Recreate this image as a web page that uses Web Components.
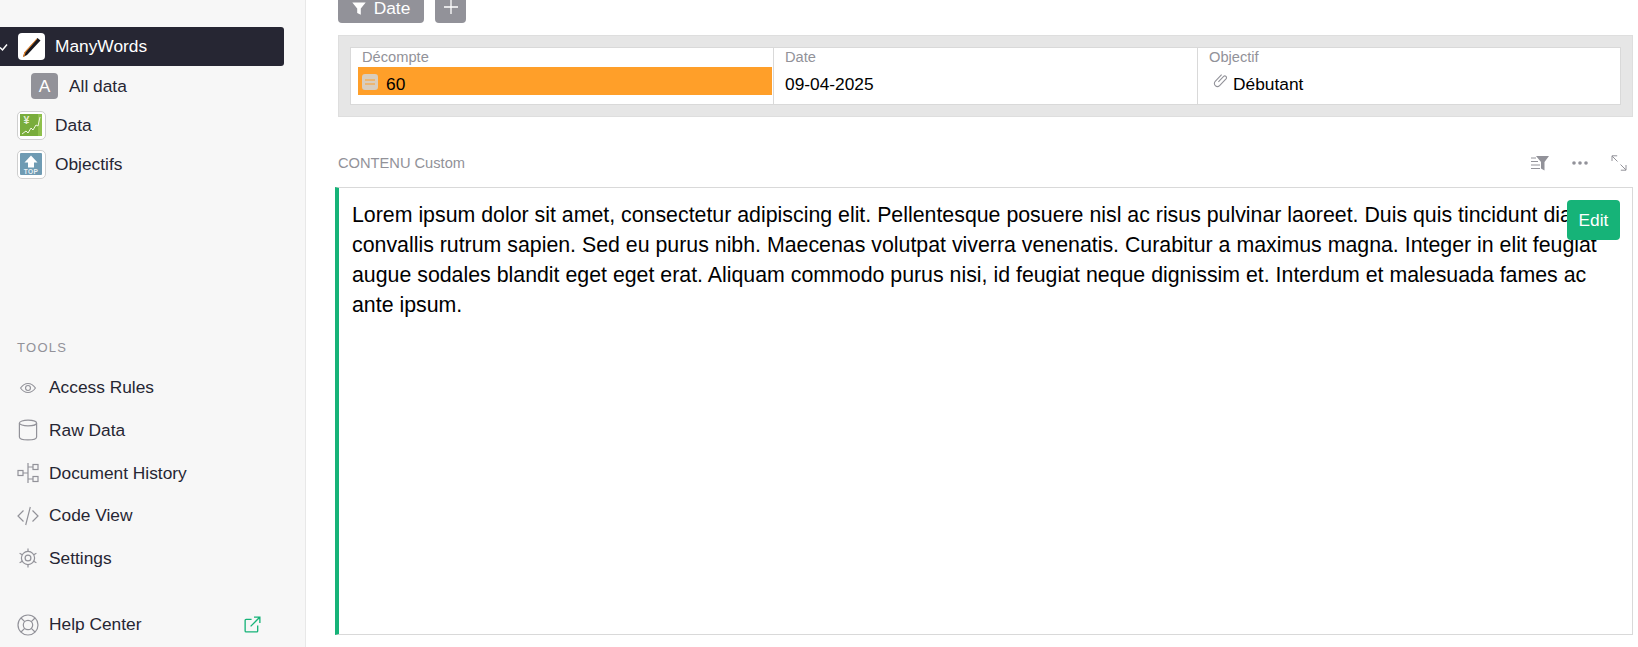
<!DOCTYPE html>
<html>
<head>
<meta charset="utf-8">
<style>
  html, body { margin: 0; height: 100%; overflow: hidden; }
  body { font-family: "Liberation Sans", Arial, sans-serif; color: #262633; background: #fff; }
</style>
</head>
<body>
<app-shell>
  <left-panel slot="side"></left-panel>
  <filter-bar slot="main"></filter-bar>
  <card-section slot="main"></card-section>
  <custom-section slot="main"></custom-section>
</app-shell>

<script>
const ICONS = {
  eye: `<svg width="18" height="14" viewBox="0 0 20 16" fill="none" stroke="#929299" stroke-width="1.3"><path d="M1.5 8C4 4.4 6.8 2.8 10 2.8S16 4.4 18.5 8C16 11.6 13.2 13.2 10 13.2S4 11.6 1.5 8Z"/><circle cx="10" cy="8" r="2.8"/></svg>`,
  db: `<svg width="20" height="22" viewBox="0 0 20 22" fill="none" stroke="#929299" stroke-width="1.2"><ellipse cx="10" cy="4" rx="8.6" ry="2.9"/><path d="M1.4 4V18C1.4 19.7 5.2 20.9 10 20.9S18.6 19.7 18.6 18V4"/></svg>`,
  history: `<svg width="22" height="22" viewBox="0 0 22 22" fill="none" stroke="#929299" stroke-width="1.2"><rect x="1" y="8.5" width="5" height="5"/><rect x="16" y="2.5" width="5" height="5"/><rect x="16" y="14.5" width="5" height="5"/><path d="M6 11H11M11 1V21M11 5H16M11 17H16"/></svg>`,
  code: `<svg width="22" height="20" viewBox="0 0 22 20" fill="none" stroke="#929299" stroke-width="1.2"><path d="M6.5 4.5L1 10L6.5 15.5M15.5 4.5L21 10L15.5 15.5M13.3 1L8.7 19"/></svg>`,
  gear: `<svg width="20" height="20" viewBox="0 0 20 20" fill="none" stroke="#929299" stroke-width="1.2"><circle cx="10" cy="10" r="6.6"/><circle cx="10" cy="10" r="2.9"/><path d="M10 .5V3.4M10 16.6V19.5M1.6 5.2L4.3 6.7M15.7 13.3L18.4 14.8M1.6 14.8L4.3 13.3M15.7 6.7L18.4 5.2"/></svg>`,
  help: `<svg width="22" height="22" viewBox="0 0 22 22" fill="none" stroke="#929299" stroke-width="1.2"><circle cx="11" cy="11" r="10"/><circle cx="11" cy="11" r="4.7"/><path d="M4 4L7.7 7.7M18 4L14.3 7.7M4 18L7.7 14.3M18 18L14.3 14.3"/></svg>`,
  ext: `<svg width="17" height="17" viewBox="0 0 18 18" fill="none" stroke="#16b378" stroke-width="1.4"><path d="M8 3.5H2.2A1 1 0 0 0 1.2 4.5V15.8A1 1 0 0 0 2.2 16.8H13.5A1 1 0 0 0 14.5 15.8V10M7 11L16.6 1.4M10.6 1.2H16.8V7.4"/></svg>`
};

class AppShell extends HTMLElement {
  constructor() {
    super();
    this.attachShadow({ mode: "open" });
    this.shadowRoot.innerHTML = `
      <style>
        :host { display: grid; grid-template-columns: 306px 1fr; height: 647px; overflow: hidden; }
        .side { background: #f7f7f7; border-right: 1px solid #e8e8e8; min-width: 0; }
        .main { display: flex; flex-direction: column; padding-left: 30px; padding-right: 5px; min-width: 0; overflow: hidden; }
      </style>
      <div class="side"><slot name="side"></slot></div>
      <div class="main"><slot name="main"></slot></div>
    `;
  }
}

class PageRow extends HTMLElement {
  constructor() {
    super();
    this.attachShadow({ mode: "open" });
    this.shadowRoot.innerHTML = `
      <style>
        :host { display: flex; align-items: center; height: 39.4px; font-size: 17.33px; color: #262633; margin-right: 21px; border-radius: 0 3px 3px 0; }
        :host([active]) { background: #262633; color: #fff; }
        :host([sub]) .wrap { padding-left: 31px; gap: 11px; }
        .wrap { display: flex; align-items: center; padding-left: 17px; gap: 9px; position: relative; }
        .check { position: absolute; left: 0; top: 50%; margin-top: -5px; display: none; }
        :host([active]) .check { display: block; }
        .label { white-space: nowrap; }
      </style>
      <div class="wrap">
        <svg class="check" width="8" height="10" viewBox="0 0 8 10" fill="none" stroke="#fff" stroke-width="1.5"><path d="M0 5.5L2.5 8L7 2.5"/></svg>
        <slot name="icon"></slot>
        <span class="label">${this.getAttribute("label")}</span>
      </div>
    `;
  }
}

class ToolRow extends HTMLElement {
  constructor() {
    super();
    this.attachShadow({ mode: "open" });
    const icon = ICONS[this.getAttribute("icon")];
    this.shadowRoot.innerHTML = `
      <style>
        :host { display: grid; grid-template-columns: 32px 1fr auto; align-items: center; height: 42.6px; padding: 0 44px 0 17px; font-size: 17.33px; color: #262633; }
        .ico { display: flex; align-items: center; width: 22px; justify-content: center; }
        svg { display: block; }
      </style>
      <span class="ico">${icon}</span>
      <span>${this.getAttribute("label")}</span>
      <slot></slot>
    `;
  }
}

class LeftPanel extends HTMLElement {
  constructor() {
    super();
    this.attachShadow({ mode: "open" });
    this.shadowRoot.innerHTML = `
      <style>
        :host { display: flex; flex-direction: column; height: 647px; }
        .pages { padding-top: 27px; }
        .badge { display: block; box-sizing: border-box; }
        .white { width: 27px; height: 27px; border-radius: 4px; background: #fff; margin-left: 1px; margin-right: 1px; }
        .letter { width: 27px; height: 26px; border-radius: 4px; background: #929299; color: #fff; font-size: 17.33px; text-align: center; line-height: 26px; }
        .emoji { width: 29px; height: 29px; border-radius: 5px; border: 1.5px solid #cfcfcf; background: #fff; padding: 2px; }
        .emoji svg, .white svg { display: block; }
        .heading { margin-top: 155px; padding-left: 17px; font-size: 13px; letter-spacing: 1.3px; color: #929299; line-height: 16px; }
        .tools { margin-top: 11px; }
        .help { margin-top: 24px; }
      </style>
      <div class="pages">
        <page-row active label="ManyWords">
          <span slot="icon" class="badge white">
            <svg width="27" height="27" viewBox="0 0 27 27"><path d="M19.5 5L22.5 7.5L9 22L5 24L6.5 19.5Z" fill="#17171f"/><path d="M4.8 24.2L6.3 19.2L18.8 5.6L19.3 6L7.6 19.6L6.4 23.4Z" fill="#e8862a"/></svg>
          </span>
        </page-row>
        <page-row sub label="All data"><span slot="icon" class="badge letter">A</span></page-row>
        <page-row label="Data">
          <span slot="icon" class="badge emoji">
            <svg width="22" height="22" viewBox="0 0 22 22"><rect width="22" height="22" fill="#79ad3c"/><rect x="18" y="0" width="4" height="22" fill="#8fc04c"/><text x="6.5" y="10" font-size="10.5" font-weight="700" fill="#e6f0d6" font-family="Liberation Sans" text-anchor="middle">¥</text><path d="M2 20L6 17L8 19L11 14L13 16L16 11L18 12L20 3" fill="none" stroke="#eef6e0" stroke-width="1"/></svg>
          </span>
        </page-row>
        <page-row label="Objectifs">
          <span slot="icon" class="badge emoji">
            <svg width="22" height="22" viewBox="0 0 22 22"><rect width="22" height="22" rx="1" fill="#6f9bb3"/><path d="M11 2.5L17.5 9.5H14V14.5H8V9.5H4.5Z" fill="#fff"/><text x="11" y="20.5" font-size="6.5" font-weight="700" fill="#eaf1f5" font-family="Liberation Sans" text-anchor="middle" letter-spacing=".5">TOP</text></svg>
          </span>
        </page-row>
      </div>
      <div class="heading">TOOLS</div>
      <div class="tools">
        <tool-row icon="eye" label="Access Rules"></tool-row>
        <tool-row icon="db" label="Raw Data"></tool-row>
        <tool-row icon="history" label="Document History"></tool-row>
        <tool-row icon="code" label="Code View"></tool-row>
        <tool-row icon="gear" label="Settings"></tool-row>
      </div>
      <div class="help">
        <tool-row icon="help" label="Help Center"><span style="display:flex">${ICONS.ext}</span></tool-row>
      </div>
    `;
  }
}

class FilterBar extends HTMLElement {
  constructor() {
    super();
    this.attachShadow({ mode: "open" });
    this.shadowRoot.innerHTML = `
      <style>
        :host { display: flex; gap: 11px; margin: -12px 0 12px 2px; height: 35px; flex: none; }
        .btn { background: #929299; color: #fff; border-radius: 4px; font-size: 17.33px; display: flex; align-items: center; justify-content: center; gap: 8px; box-sizing: border-box; }
        .date { width: 86px; padding-top: 5px; }
        .add { width: 31px; font-size: 0; padding-top: 2px; }
        svg { display: block; }
      </style>
      <div class="btn date">
        <svg width="14" height="13" viewBox="0 0 14 13"><path d="M0.3 0.5H13.7L8.8 6.5V12.7L5.2 11V6.5Z" fill="#fff"/></svg>
        <span>Date</span>
      </div>
      <div class="btn add">
        <svg width="14" height="14" viewBox="0 0 14 14" stroke="#fff" stroke-width="1.3"><path d="M7 0V14M0 7H14"/></svg>
      </div>
    `;
  }
}

class CardField extends HTMLElement {
  constructor() {
    super();
    this.attachShadow({ mode: "open" });
    this.shadowRoot.innerHTML = `
      <style>
        :host { display: block; min-width: 0; border-left: 1px solid #d9d9d9; position: relative; }
        :host(:first-child) { border-left: 0; }
        .label { font-size: 14.67px; line-height: 16px; color: #929299; padding: 1px 0 0 11px; }
        .value { font-size: 17.33px; color: #000; line-height: 28px; margin-top: 2px; }
      </style>
      <div class="label">${this.getAttribute("label")}</div>
      <div class="value"><slot></slot></div>
    `;
  }
}

class CardSection extends HTMLElement {
  constructor() {
    super();
    this.attachShadow({ mode: "open" });
    this.shadowRoot.innerHTML = `
      <style>
        :host { display: block; flex: none; box-sizing: border-box; margin-left: 2px; width: 1295px; height: 82px; background: #e6e6e6; border: 1px solid #dedede; padding: 11px 11px; }
        .grid { display: grid; grid-template-columns: 422px 424px 1fr; height: 58px; box-sizing: border-box; background: #fff; border: 1px solid #d9d9d9; }
        .orange { display: flex; align-items: center; gap: 8px; margin: 0 1px 0 7px; height: 28px; padding-left: 4px; background: #ff9f29; }
        .orange b { font-weight: 400; margin-top: 6px; }
        .eq { width: 16px; height: 16px; margin-top: 2px; border-radius: 3px; background: #d9cdbd; display: flex; align-items: center; justify-content: center; }
        .plain { padding: 3px 0 0 11px; }
        .ref { display: flex; align-items: center; gap: 5px; padding: 3px 0 0 14px; }
        svg { display: block; }
      </style>
      <div class="grid">
        <card-field label="Décompte">
          <div class="orange">
            <span class="eq"><svg width="10" height="6" viewBox="0 0 10 6" stroke="#ff9f29" stroke-width="1.2"><path d="M0 1H10M0 5H10"/></svg></span>
            <b>60</b>
          </div>
        </card-field>
        <card-field label="Date"><div class="plain">09-04-2025</div></card-field>
        <card-field label="Objectif">
          <div class="ref">
            <svg style="margin-top:-8px" width="16" height="16" viewBox="0 0 16 16" fill="none" stroke="#929299" stroke-width="1.1"><path d="M6.4 9.8L11.6 4.4A1.7 1.7 0 0 1 14 6.8L7.6 13.6A3 3 0 0 1 3.2 9.4L9.6 2.6"/></svg>
            <span>Débutant</span>
          </div>
        </card-field>
      </div>
    `;
  }
}

class CustomSection extends HTMLElement {
  constructor() {
    super();
    this.attachShadow({ mode: "open" });
    this.shadowRoot.innerHTML = `
      <style>
        :host { display: block; flex: none; width: 1298px; margin-left: -1px; }
        .head { display: flex; align-items: center; justify-content: space-between; height: 70px; padding: 22px 6px 0 3px; box-sizing: border-box; }
        .title { font-size: 14.67px; color: #929299; }
        .tools { display: flex; align-items: center; gap: 23px; }
        svg { display: block; }
        .box { box-sizing: border-box; position: relative; height: 448px; border: 1px solid #d9d9d9; border-left: 4px solid #16b378; overflow: hidden; background: #fff; }
        p { margin: 0; padding: 12px 12px 0 13px; font-size: 21.33px; line-height: 30px; color: #000; }
        .edit { position: absolute; top: 12px; right: 12px; width: 53px; height: 40px; border-radius: 4px; background: #16b378; color: #fff; font-size: 17.33px; display: flex; align-items: center; justify-content: center; }
      </style>
      <div class="head">
        <span class="title">CONTENU Custom</span>
        <span class="tools">
          <svg width="19" height="16" viewBox="0 0 19 16"><path d="M6 1H19L14.5 7V15.5L11 13.5V7Z" fill="#929299"/><path d="M1 3H6M1 6.5H8M1 10H10M1 13.5H10" stroke="#929299" stroke-width="1" fill="none"/></svg>
          <svg width="16" height="4" viewBox="0 0 16 4" fill="#929299"><circle cx="2" cy="2" r="1.8"/><circle cx="8" cy="2" r="1.8"/><circle cx="14" cy="2" r="1.8"/></svg>
          <svg width="16" height="16" viewBox="0 0 16 16" fill="none" stroke="#929299" stroke-width="1"><path d="M1 6V.8H6.2M1 1L6.5 6.5M15 10V15.2H9.8M15 15L9.5 9.5"/></svg>
        </span>
      </div>
      <div class="box">
        <p>Lorem ipsum dolor sit amet, consectetur adipiscing elit. Pellentesque posuere nisl ac risus pulvinar laoreet. Duis quis tincidunt diam convallis rutrum sapien. Sed eu purus nibh. Maecenas volutpat viverra venenatis. Curabitur a maximus magna. Integer in elit feugiat augue sodales blandit eget eget erat. Aliquam commodo purus nisi, id feugiat neque dignissim et. Interdum et malesuada fames ac ante ipsum.</p>
        <div class="edit">Edit</div>
      </div>
    `;
  }
}

customElements.define("app-shell", AppShell);
customElements.define("page-row", PageRow);
customElements.define("tool-row", ToolRow);
customElements.define("left-panel", LeftPanel);
customElements.define("filter-bar", FilterBar);
customElements.define("card-field", CardField);
customElements.define("card-section", CardSection);
customElements.define("custom-section", CustomSection);
</script>
</body>
</html>
